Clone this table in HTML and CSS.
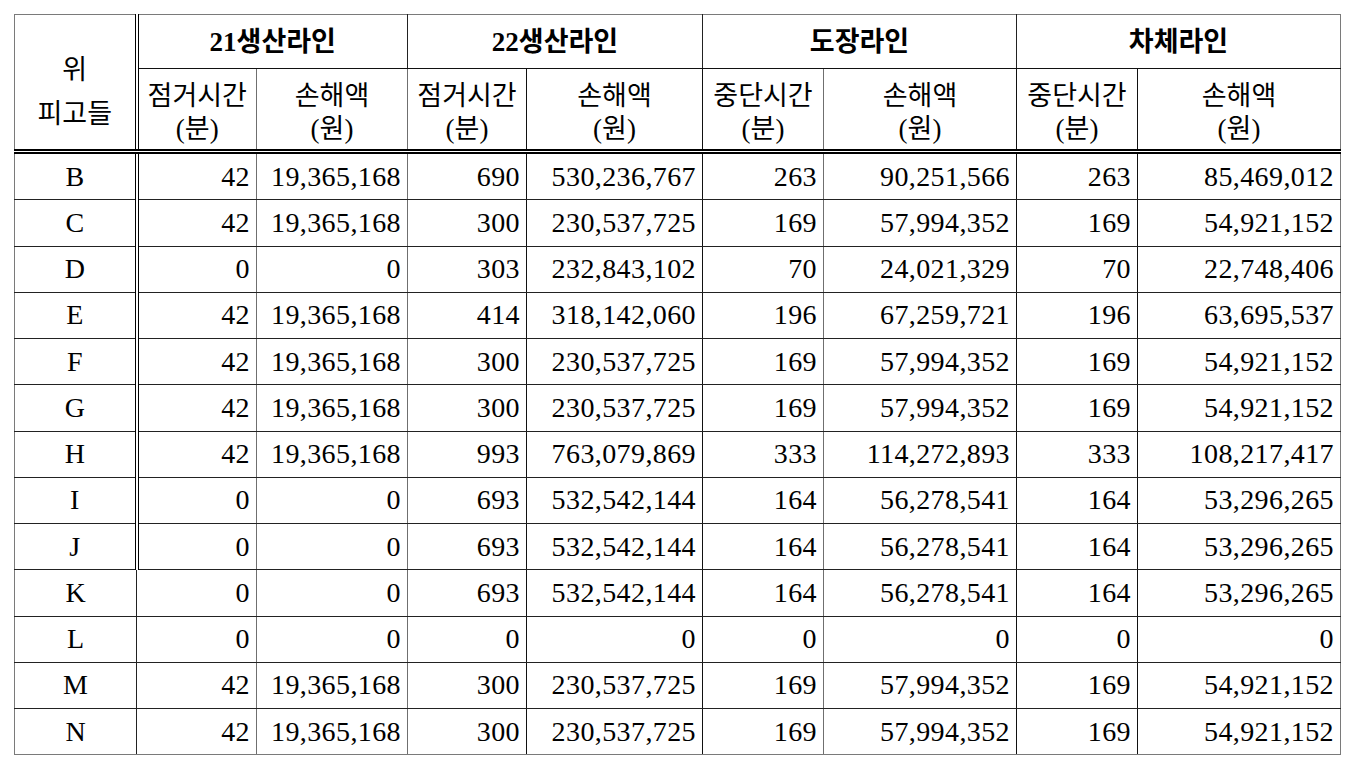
FILE: index.html
```html
<!DOCTYPE html>
<html lang="ko">
<head>
<meta charset="utf-8">
<title>손해액 표</title>
<link rel="stylesheet" href="styles.css">
</head>
<body>
<table class="loss">
  <colgroup>
    <col class="c-name"><col class="c-t1"><col class="c-a1"><col class="c-t2"><col class="c-a2"><col class="c-t3"><col class="c-a3"><col class="c-t4"><col class="c-a4">
  </colgroup>
  <thead>
    <tr class="h1">
      <th rowspan="2" class="who"><span class="who-top">위</span><span class="who-bot">피고들</span></th>
      <th colspan="2" class="grp">21생산라인</th>
      <th colspan="2" class="grp">22생산라인</th>
      <th colspan="2" class="grp">도장라인</th>
      <th colspan="2" class="grp last">차체라인</th>
    </tr>
    <tr class="h2">
      <th class="sub v-g">점거시간<br>(분)</th>
      <th class="sub v-g">손해액<br>(원)</th>
      <th class="sub v-k">점거시간<br>(분)</th>
      <th class="sub v-k">손해액<br>(원)</th>
      <th class="sub v-g">중단시간<br>(분)</th>
      <th class="sub v-k">손해액<br>(원)</th>
      <th class="sub v-k">중단시간<br>(분)</th>
      <th class="sub last">손해액<br>(원)</th>
    </tr>
  </thead>
  <tbody>
    <tr class="dbl"><td class="nm">B</td><td class="v-g">42</td><td class="v-g">19,365,168</td><td class="v-k">690</td><td class="v-k">530,236,767</td><td class="v-g">263</td><td class="v-k">90,251,566</td><td class="v-k">263</td><td class="last">85,469,012</td></tr>
    <tr class="dbl"><td class="nm">C</td><td class="v-g">42</td><td class="v-g">19,365,168</td><td class="v-k">300</td><td class="v-k">230,537,725</td><td class="v-g">169</td><td class="v-k">57,994,352</td><td class="v-k">169</td><td class="last">54,921,152</td></tr>
    <tr class="dbl"><td class="nm">D</td><td class="v-g">0</td><td class="v-g">0</td><td class="v-k">303</td><td class="v-k">232,843,102</td><td class="v-g">70</td><td class="v-k">24,021,329</td><td class="v-k">70</td><td class="last">22,748,406</td></tr>
    <tr class="dbl"><td class="nm">E</td><td class="v-g">42</td><td class="v-g">19,365,168</td><td class="v-k">414</td><td class="v-k">318,142,060</td><td class="v-g">196</td><td class="v-k">67,259,721</td><td class="v-k">196</td><td class="last">63,695,537</td></tr>
    <tr class="dbl"><td class="nm">F</td><td class="v-g">42</td><td class="v-g">19,365,168</td><td class="v-k">300</td><td class="v-k">230,537,725</td><td class="v-g">169</td><td class="v-k">57,994,352</td><td class="v-k">169</td><td class="last">54,921,152</td></tr>
    <tr class="dbl"><td class="nm">G</td><td class="v-g">42</td><td class="v-g">19,365,168</td><td class="v-k">300</td><td class="v-k">230,537,725</td><td class="v-g">169</td><td class="v-k">57,994,352</td><td class="v-k">169</td><td class="last">54,921,152</td></tr>
    <tr class="dbl"><td class="nm">H</td><td class="v-g">42</td><td class="v-g">19,365,168</td><td class="v-k">993</td><td class="v-k">763,079,869</td><td class="v-g">333</td><td class="v-k">114,272,893</td><td class="v-k">333</td><td class="last">108,217,417</td></tr>
    <tr class="dbl"><td class="nm">I</td><td class="v-g">0</td><td class="v-g">0</td><td class="v-k">693</td><td class="v-k">532,542,144</td><td class="v-g">164</td><td class="v-k">56,278,541</td><td class="v-k">164</td><td class="last">53,296,265</td></tr>
    <tr class="dbl"><td class="nm">J</td><td class="v-g">0</td><td class="v-g">0</td><td class="v-k">693</td><td class="v-k">532,542,144</td><td class="v-g">164</td><td class="v-k">56,278,541</td><td class="v-k">164</td><td class="last">53,296,265</td></tr>
    <tr><td class="nm">K</td><td class="v-g">0</td><td class="v-g">0</td><td class="v-k">693</td><td class="v-k">532,542,144</td><td class="v-g">164</td><td class="v-k">56,278,541</td><td class="v-k">164</td><td class="last">53,296,265</td></tr>
    <tr><td class="nm">L</td><td class="v-g">0</td><td class="v-g">0</td><td class="v-k">0</td><td class="v-k">0</td><td class="v-g">0</td><td class="v-k">0</td><td class="v-k">0</td><td class="last">0</td></tr>
    <tr><td class="nm">M</td><td class="v-g">42</td><td class="v-g">19,365,168</td><td class="v-k">300</td><td class="v-k">230,537,725</td><td class="v-g">169</td><td class="v-k">57,994,352</td><td class="v-k">169</td><td class="last">54,921,152</td></tr>
    <tr class="end"><td class="nm">N</td><td class="v-g">42</td><td class="v-g">19,365,168</td><td class="v-k">300</td><td class="v-k">230,537,725</td><td class="v-g">169</td><td class="v-k">57,994,352</td><td class="v-k">169</td><td class="last">54,921,152</td></tr>
  </tbody>
</table>
</body>
</html>
```

FILE: styles.css
```css
html, body {
  margin: 0;
  padding: 0;
  background: #ffffff;
}

body {
  padding: 14px 0 0 14px;
  font-family: "Liberation Serif", "Noto Sans CJK KR", serif;
  color: #000;
}

.loss {
  border-collapse: collapse;
  table-layout: fixed;
  width: 1326px;
  border: 1px solid #7a7a7a;
}

.c-name { width: 122px; }
.c-t1 { width: 120px; }
.c-a1 { width: 151px; }
.c-t2 { width: 119px; }
.c-a2 { width: 176px; }
.c-t3 { width: 121px; }
.c-a3 { width: 193px; }
.c-t4 { width: 121px; }
.c-a4 { width: 203px; }

.loss th,
.loss td {
  padding: 0;
  border: 1px solid #222;
  white-space: nowrap;
  overflow: hidden;
}

.loss th {
  font-weight: normal;
  font-size: 27px;
  text-align: center;
}

.loss .h1 {
  height: 54px;
}

.loss .h2 {
  height: 83px;
}

.loss th.grp {
  font-weight: bold;
  border-top: 1px solid #7a7a7a;
  border-left: 1px solid #6f6f6f;
  border-bottom: 1px solid #111;
  vertical-align: middle;
  line-height: 30px;
}

.loss th.who {
  border-right: 4px double #000;
  border-bottom: 5px double #000;
  border-left: 1px solid #7a7a7a;
  border-top: 1px solid #7a7a7a;
  vertical-align: top;
  padding-top: 33px;
}

.loss .who-top,
.loss .who-bot {
  display: block;
  line-height: 44px;
}

.loss th.sub {
  line-height: 33px;
  vertical-align: top;
  padding-top: 11px;
  border-bottom: 5px double #000;
}

.loss td {
  font-size: 28px;
  letter-spacing: 0.4px;
  text-align: right;
  padding-right: 6px;
  height: 45.25px;
  vertical-align: middle;
  line-height: 30px;
}

.loss td.nm {
  text-align: center;
  padding-right: 0;
  letter-spacing: 0;
  border-left: 1px solid #7a7a7a;
}

.loss .dbl td.nm {
  border-right: 4px double #000;
}

.loss .v-g {
  border-right: 1px solid #6f6f6f;
}

.loss .v-k {
  border-right: 1px solid #111;
}

.loss .last {
  border-right: 1px solid #7a7a7a;
}

.loss .end td {
  border-bottom: 1px solid #7a7a7a;
}
```
